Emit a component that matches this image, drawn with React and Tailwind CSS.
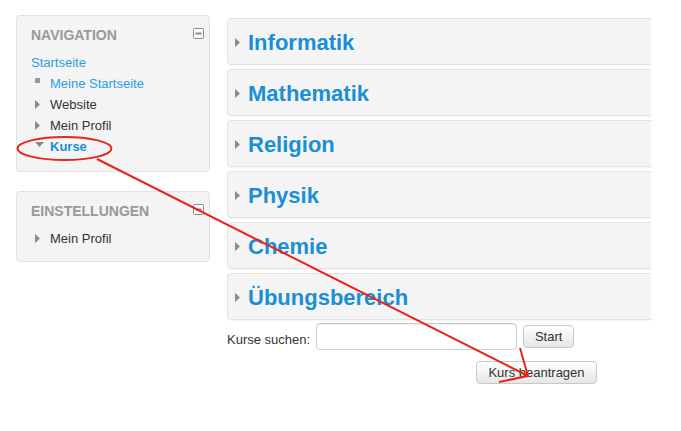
const courses = ['Informatik', 'Mathematik', 'Religion', 'Physik', 'Chemie', 'Übungsbereich']

function RightTri({ className = '' }) {
  return (
    <svg width="5" height="9" viewBox="0 0 5 9" className={className}>
      <path d="M0 0 L5 4.5 L0 9 Z" fill="#8a8a8a" />
    </svg>
  )
}

function DownTri() {
  return (
    <svg width="9" height="5" viewBox="0 0 9 5">
      <path d="M0 0 L9 0 L4.5 5 Z" fill="#8a8a8a" />
    </svg>
  )
}

function CollapseIcon() {
  return (
    <svg width="11" height="11" viewBox="0 0 11 11">
      <rect x="0.5" y="0.5" width="10" height="10" rx="1" fill="#fafafa" stroke="#8c8c8c" />
      <rect x="2.5" y="4.5" width="6" height="2" fill="#8c8c8c" />
    </svg>
  )
}

function Block({ title, children, className = '' }) {
  return (
    <div className={`rounded-[4px] border border-[#e2e2e2] bg-[#f4f4f4] px-[14px] pt-[9px] ${className}`}>
      <div className="flex h-[20px] items-center justify-between">
        <span className="text-[14px] font-bold uppercase text-[#999]">{title}</span>
        <span className="-mt-[4px] mr-[-9px]">
          <CollapseIcon />
        </span>
      </div>
      {children}
    </div>
  )
}

function Item({ icon, children, className = 'text-[#333]' }) {
  return (
    <div className="flex h-[21px] items-center">
      <span className="flex w-[19px] items-center justify-start pl-[4px]">{icon}</span>
      <span className={className}>{children}</span>
    </div>
  )
}

export default function App() {
  return (
    <div
      className="relative h-[431px] w-[681px] overflow-hidden bg-white text-[13px]"
      style={{ fontFamily: '"Liberation Sans", Arial, sans-serif' }}
    >
      <div className="flex">
        {/* left column */}
        <div className="ml-[16px] w-[194px] pt-[15px]">
          <Block title="Navigation" className="pb-[14px]">
            <div className="mt-[7px]">
              <div className="flex h-[21px] items-center text-[#2d9ee0]">Startseite</div>
              <Item
                icon={<span className="mb-[6px] block h-[5px] w-[5px] bg-[#999]" />}
                className="text-[#2d9ee0]"
              >
                Meine Startseite
              </Item>
              <Item icon={<RightTri />}>Website</Item>
              <Item icon={<RightTri />}>Mein Profil</Item>
              <Item icon={<span className="-mt-[4px] block"><DownTri /></span>} className="font-bold text-[#1a8fd5]">
                Kurse
              </Item>
            </div>
          </Block>

          <Block title="Einstellungen" className="mt-[19px] pb-[12px]">
            <div className="mt-[7px]">
              <Item icon={<RightTri />}>Mein Profil</Item>
            </div>
          </Block>
        </div>

        {/* main column */}
        <div className="ml-[17px] w-[424px] overflow-hidden pt-[18px]">
          <div className="flex w-[460px] flex-col gap-[4px]">
            {courses.map((c) => (
              <div
                key={c}
                className="flex h-[47px] items-center rounded-[4px] border border-[#e2e2e2] bg-[#f4f4f4] pl-[7px] pt-[1px] shadow-[0_1px_1px_rgba(0,0,0,0.04)]"
              >
                <RightTri className="mr-[8px]" />
                <span className="text-[22px] font-bold text-[#1a8fd5]">{c}</span>
              </div>
            ))}
          </div>

          <div className="mt-[3px] flex items-center text-[#333]">
            <span className="mr-[6px] mt-[6px]">Kurse suchen:</span>
            <input
              type="text"
              className="h-[27px] w-[201px] rounded-[4px] border border-[#ccc] bg-white shadow-[inset_0_1px_1px_rgba(0,0,0,0.08)] outline-none"
            />
            <button className="ml-[6px] h-[23px] w-[51px] rounded-[4px] border border-[#c8c8c8] bg-gradient-to-b from-white to-[#e6e6e6] text-[13px] text-[#333]">
              Start
            </button>
          </div>

          <button className="ml-[249px] mt-[11px] h-[23px] w-[121px] rounded-[4px] border border-[#c8c8c8] bg-gradient-to-b from-white to-[#e6e6e6] text-[13px] text-[#333]">
            Kurs beantragen
          </button>
        </div>
      </div>

      {/* red annotation overlay */}
      <svg className="pointer-events-none absolute left-0 top-0" width="681" height="431" viewBox="0 0 681 431">
        <ellipse cx="64.5" cy="148.5" rx="47" ry="11.5" fill="none" stroke="#e8231c" strokeWidth="2" />
        <path d="M97 159 L528 376" stroke="#e8231c" strokeWidth="2" fill="none" />
        <path d="M520 348 L528 376 L499 382" stroke="#e8231c" strokeWidth="2" fill="none" strokeLinejoin="round" />
      </svg>
    </div>
  )
}
